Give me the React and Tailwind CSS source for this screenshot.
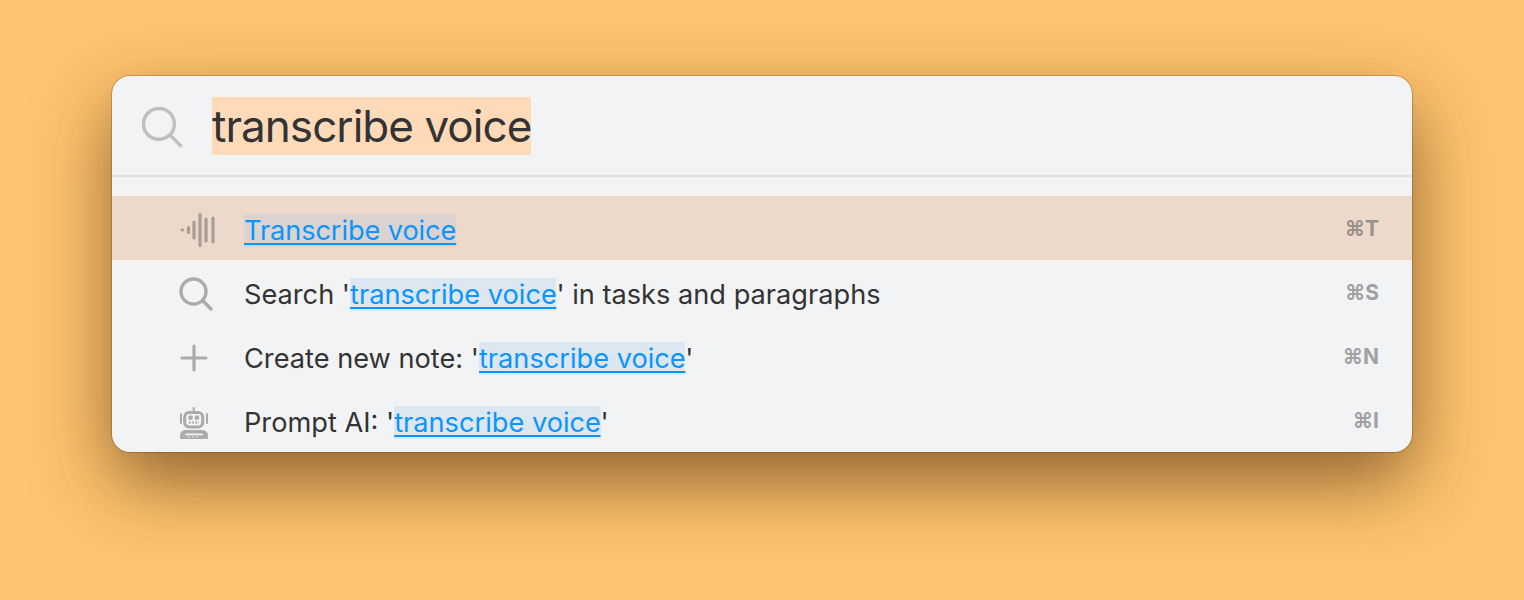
import React from "react";

const Search = ({ className, sw = 2.8 }) => (
  <svg viewBox="0 0 34 34" fill="none" stroke="currentColor" strokeLinecap="round" className={className}>
    <circle cx="14.5" cy="14.5" r="12.5" strokeWidth={sw} />
    <path d="M23.8 23.8 L32 32" strokeWidth={sw} />
  </svg>
);

const Wave = () => (
  <svg viewBox="0 0 36 34" width="36" height="34" fill="none" stroke="currentColor" strokeLinecap="round" strokeWidth="3.2" className="translate-x-[3px] text-[#a99e95]">
    <path d="M2 17h.6M8.5 14.5v5M14 9v16M20 1.5v31M26 6v22M33 5v24" />
  </svg>
);

const Plus = () => (
  <svg viewBox="0 0 28 28" width="28" height="28" fill="none" stroke="currentColor" strokeWidth="3.2" strokeLinecap="round" className="-translate-x-[1px] text-[#ababab]">
    <path d="M14 2v24M2 14h24" />
  </svg>
);

const Robot = () => (
  <svg viewBox="0 0 28 32" width="28" height="32" fill="none" className="-translate-x-[1px] translate-y-[1px] text-[#ababab]">
    <path d="M13.7 1v4" stroke="currentColor" strokeWidth="2" strokeLinecap="round" />
    <rect x="4.7" y="5.5" width="18" height="14.5" rx="4.5" stroke="currentColor" strokeWidth="3" />
    <rect x="8.5" y="8.5" width="4.2" height="4.2" rx="1.2" fill="currentColor" />
    <rect x="14.8" y="8.5" width="4.2" height="4.2" rx="1.2" fill="currentColor" />
    <path d="M9 15.5h10" stroke="currentColor" strokeWidth="2.4" strokeDasharray="1.6 1.6" />
    <path d="M1 7v9M27 7v9" stroke="currentColor" strokeWidth="2" strokeLinecap="round" />
    <path d="M5.5 23h17a5.5 5.5 0 0 1 5.5 5.5v2a1.5 1.5 0 0 1-1.5 1.5h-25A1.5 1.5 0 0 1 0 30.5v-2A5.5 5.5 0 0 1 5.5 23Z" fill="currentColor" />
    <path d="M6 27.4h16" stroke="#f2f3f5" strokeWidth="1.8" strokeLinecap="round" />
    <path d="M9 29v1.6M13 29v1.6M17 29v1.6" stroke="#f2f3f5" strokeWidth="1" />
  </svg>
);

const Link = ({ children, active }) => (
  <span className={`text-[#0a95ff] underline underline-offset-[3px] decoration-[2px] ${active ? "bg-[#dbd3d0] tracking-[-0.1px]" : "bg-[#dde7f2]"}`}>
    {children}
  </span>
);

const Row = ({ icon, children, shortcut, active }) => (
  <div className={`flex h-16 items-center pr-[33px] ${active ? "bg-[#ecd9ca]" : ""}`}>
    <div className="flex w-[132px] shrink-0 justify-end pr-[31px] pt-[4px]">
      <div className="flex w-[36px] justify-center">{icon}</div>
    </div>
    <div className="flex-1 pt-[6px] text-[27.2px] text-[#333333]">{children}</div>
    <div className={`pt-[1px] text-[21px] font-bold ${active ? "text-[#98918b]" : "text-[#a1a1a3]"}`}>{shortcut}</div>
  </div>
);

export default function App() {
  return (
    <div className="h-[600px] overflow-hidden bg-[#ffc46f] px-[112px] pt-[76px] font-['Inter','Noto_Sans',sans-serif]">
      <div className="h-[376px] overflow-hidden rounded-[18px] bg-[#f2f3f5] shadow-[0_30px_75px_rgba(60,30,0,0.58),0_0_0_1px_rgba(110,70,10,0.3)]">
        <div className="flex h-[101px] items-center border-b-2 border-[#dfe1e6] pl-[29px]">
          <Search className="mt-[2px] h-[42px] w-[42px] text-[#bfbfbf]" />
          <span className="ml-[29px] bg-[#ffdab9] text-[44px] leading-[58px] tracking-[-0.95px] text-[#333333]">transcribe voice</span>
        </div>
        <div className="pt-[19px]">
          <Row active icon={<Wave />} shortcut="⌘T">
            <Link active>Transcribe voice</Link>
          </Row>
          <Row icon={<Search sw={3.4} className="translate-x-[1px] h-[34px] w-[34px] text-[#ababab]" />} shortcut="⌘S">
            Search '<Link>transcribe voice</Link>' in tasks and paragraphs
          </Row>
          <Row icon={<Plus />} shortcut="⌘N">
            Create new note: '<Link>transcribe voice</Link>'
          </Row>
          <Row icon={<Robot />} shortcut="⌘I">
            Prompt AI: '<Link>transcribe voice</Link>'
          </Row>
        </div>
      </div>
    </div>
  );
}
